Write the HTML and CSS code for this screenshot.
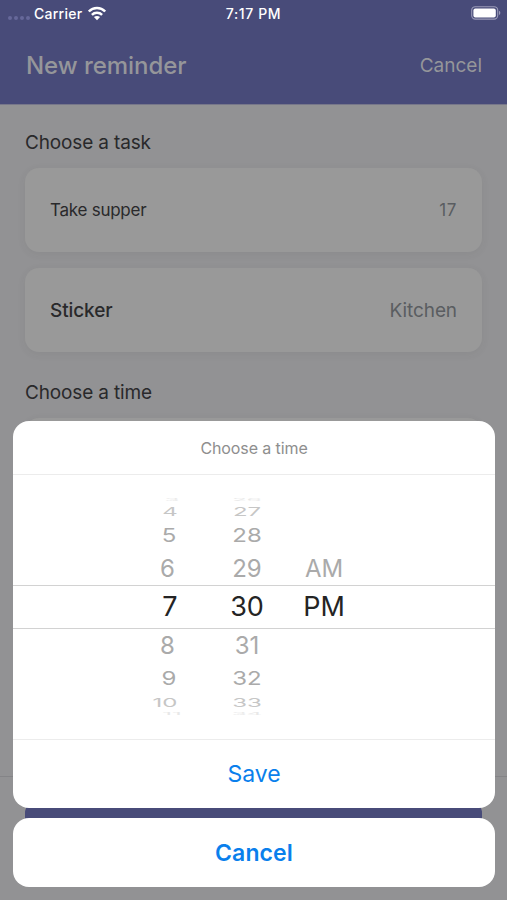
FILE: index.html
```html
<!DOCTYPE html>
<html lang="en">
<head>
<meta charset="utf-8">
<title>New reminder</title>
<link rel="stylesheet" href="styles.css">
</head>
<body>
<div class="screen">
  <header class="header">
    <div class="status">
      <div class="carrier">
        <span class="dots"><i></i><i></i><i></i><i></i></span>
        <span class="carrier-name">Carrier</span>
        <svg class="wifi" width="20" height="15" viewBox="0 0 20 15">
          <g fill="none" stroke="#fff" stroke-width="2.5">
            <path d="M1.8 5.5C6.3.9 13.7.9 18.2 5.5"/>
            <path d="M4.9 8.8C7.7 6 12.3 6 15.1 8.8"/>
          </g>
          <path fill="#fff" d="M10 14.2 6.9 11.1C8.6 9.5 11.4 9.5 13.1 11.1Z"/>
        </svg>
      </div>
      <span class="clock">7:17 PM</span>
      <svg class="battery" width="30" height="14" viewBox="0 0 30 14">
        <rect x=".7" y=".7" width="26" height="12.4" rx="3.6" fill="none" stroke="#9a9bb8" stroke-width="1.1"/>
        <rect x="2.4" y="2.4" width="22.4" height="9" rx="2" fill="#fff"/>
        <path d="M28 4.8c1.8.6 1.8 3.6 0 4.2Z" fill="#9a9bb8"/>
      </svg>
    </div>
    <div class="titlebar">
      <h1>New reminder</h1>
      <span class="header-cancel">Cancel</span>
    </div>
  </header>
  <main class="content">
    <h2>Choose a task</h2>
    <div class="card card-task"><span>Take supper</span><span class="value">17</span></div>
    <div class="card card-sticker"><span>Sticker</span><span class="value">Kitchen</span></div>
    <h2 class="time-heading">Choose a time</h2>
    <div class="card"></div>
  </main>
  <footer class="footer"><div class="submit"></div></footer>

  <div class="overlay">
    <section class="sheet">
      <h3>Choose a time</h3>
      <div class="picker">
        <div class="row edge"><span class="hour"><b>3</b></span><span><b>26</b></span><span></span></div>
        <div class="row far"><span class="hour"><b>4</b></span><span><b>27</b></span><span></span></div>
        <div class="row mid"><span class="hour"><b>5</b></span><span><b>28</b></span><span></span></div>
        <div class="row near"><span class="hour"><b>6</b></span><span><b>29</b></span><span><b>AM</b></span></div>
        <div class="row selected"><span class="hour"><b>7</b></span><span><b>30</b></span><span><b>PM</b></span></div>
        <div class="row near"><span class="hour"><b>8</b></span><span><b>31</b></span><span></span></div>
        <div class="row mid"><span class="hour"><b>9</b></span><span><b>32</b></span><span></span></div>
        <div class="row far"><span class="hour two-digit"><b>10</b></span><span><b>33</b></span><span></span></div>
        <div class="row edge"><span class="hour"><b>11</b></span><span><b>34</b></span><span></span></div>
      </div>
      <div class="save">Save</div>
    </section>
    <section class="dismiss">Cancel</section>
  </div>
</div>
</body>
</html>
```
FILE: styles.css
```css
* { box-sizing: border-box; }
body {
  margin: 0;
  font-family: Inter, "Liberation Sans", sans-serif;
  color: #29292b;
}
h1, h2, h3 { margin: 0; font-weight: 500; }
.screen {
  position: relative;
  display: flex;
  flex-direction: column;
  width: 507px;
  height: 900px;
  overflow: hidden;
  background: #929294;
}
.header {
  flex: none;
  height: 105px;
  background: #484b79;
  border-bottom: 1px solid #77778a;
}
.status {
  display: grid;
  grid-template-columns: 1fr auto 1fr;
  align-items: center;
  height: 26px;
  padding: 0 6px 0 8px;
  color: #fff;
  font-size: 14px;
  font-weight: 500;
}
.carrier { display: flex; align-items: center; }
.dots { display: flex; gap: 2px; width: 26px; padding-top: 9px; }
.dots i { width: 4px; height: 4px; border-radius: 50%; background: #66689a; }
.carrier-name { letter-spacing: .25px; }
.clock { margin-right: 2px; letter-spacing: .6px; }
.wifi { margin-left: 5px; }
.battery { justify-self: end; }
.titlebar {
  display: flex;
  justify-content: space-between;
  align-items: center;
  height: 78px;
  padding: 0 25px 0 26px;
  color: #95969a;
}
h1 { font-size: 24px; letter-spacing: -.05px; }
.header-cancel { font-size: 19px; }
.content { flex: 1; padding: 26px 25px 0; }
h2 {
  height: 24px;
  margin-bottom: 13px;
  font-size: 19px;
  font-weight: 400;
  line-height: 24px;
  letter-spacing: -.15px;
}
.card {
  display: flex;
  justify-content: space-between;
  align-items: center;
  height: 84px;
  margin-bottom: 16px;
  padding: 0 25px;
  border-radius: 14px;
  background: #999;
  box-shadow: 0 2px 8px rgba(50, 50, 60, .07);
}
.card-task { font-size: 17px; letter-spacing: -.25px; }
.card-sticker { font-size: 19px; font-weight: 500; letter-spacing: -.1px; }
.value { color: #5a5d61; }
.card-task .value { letter-spacing: .6px; }
.card-sticker .value { font-weight: 400; }
.time-heading { margin-top: 29px; }
.footer {
  flex: none;
  height: 124px;
  padding: 24px 25px;
  border-top: 1px solid #848487;
}
.submit { height: 62px; border-radius: 12px; background: #484b79; }
.overlay {
  position: absolute;
  inset: 421px 12px 12px 13px;
  display: flex;
  flex-direction: column;
  gap: 10px;
}
.sheet, .dismiss { border-radius: 16px; background: #fff; }
.sheet { height: 387px; overflow: hidden; }
h3 {
  height: 54px;
  border-bottom: 1px solid #ececec;
  color: #8e8e8e;
  font-size: 16px;
  font-weight: 400;
  line-height: 54px;
  letter-spacing: -.1px;
  text-align: center;
}
.picker { height: 264px; padding-top: 21px; }
.row {
  display: grid;
  grid-template-columns: 60px 60px 60px;
  column-gap: 17px;
  align-items: center;
  padding-left: 127px;
  color: #aaa;
  font-size: 24px;
}
.row span { display: flex; justify-content: center; }
.row b { font-weight: 400; line-height: 30px; }
.edge { height: 8px; color: #e8e8e8; }
.far { height: 15px; color: #c6c6c6; }
.mid, .near { height: 33px; }
.edge b { margin: -11px 0; transform: scaleY(.16); }
.far b { margin: -8px 0; transform: scaleY(.48); }
.mid b { transform: scaleY(.8); }
.selected {
  height: 44px;
  border: solid #d2d2d2;
  border-width: 1px 0;
  color: #242424;
  font-size: 27px;
}
.near .hour { padding-right: 5px; }
.mid .hour { padding-right: 2px; }
.edge .hour { padding-left: 4px; }
.far .two-digit { padding-right: 10px; }
.save {
  height: 69px;
  border-top: 1px solid #ececec;
  color: #0a7fec;
  font-size: 23px;
  line-height: 69px;
  text-align: center;
}
.dismiss {
  height: 69px;
  color: #0a7fec;
  font-size: 23px;
  font-weight: 600;
  line-height: 70px;
  letter-spacing: .1px;
  text-align: center;
}
```
